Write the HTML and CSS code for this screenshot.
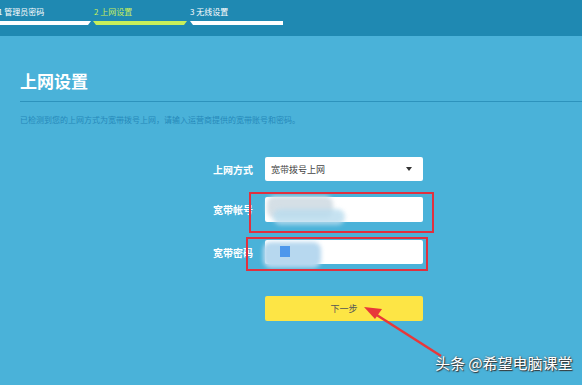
FILE: index.html
```html
<!DOCTYPE html>
<html lang="zh-CN">
<head>
  <meta charset="UTF-8">
  <title>上网设置</title>
  <link rel="stylesheet" href="styles.css">
</head>
<body>
  <div class="steps">
    <div class="step done"><span class="step-name">1 管理员密码</span><span class="bar"></span></div>
    <div class="step active"><span class="step-name">2 上网设置</span><span class="bar"></span></div>
    <div class="step"><span class="step-name">3 无线设置</span><span class="bar"></span></div>
  </div>

  <div class="main">
    <h1>上网设置</h1>
    <p class="desc">已检测到您的上网方式为宽带拨号上网，请输入运营商提供的宽带账号和密码。</p>

    <div class="form">
      <div class="row">
        <label>上网方式</label>
        <div class="select">宽带拨号上网<span class="caret"></span></div>
      </div>
      <div class="row row-account">
        <label>宽带帐号</label>
        <div class="field">
          <span class="smudge smudge-a"></span>
          <span class="smudge smudge-a2"></span>
          <span class="mark mark-a"></span>
        </div>
      </div>
      <div class="row row-pass">
        <label>宽带密码</label>
        <div class="field">
          <span class="smudge smudge-b"></span>
          <span class="blue-dot"></span>
          <span class="mark mark-b"></span>
        </div>
      </div>
      <div class="row row-btn">
        <label></label>
        <button class="next">下一步</button>
      </div>
    </div>
  </div>

  <svg class="arrow" width="582" height="385" viewBox="0 0 582 385">
    <line x1="441" y1="356" x2="372" y2="312" stroke="#e8373a" stroke-width="2.5"/>
    <polygon points="364,307 382,309 375,319" fill="#e8373a"/>
  </svg>

  <div class="watermark">头条 @希望电脑课堂</div>
</body>
</html>
```

FILE: styles.css
```css
body {
  margin: 0;
  width: 582px;
  height: 385px;
  overflow: hidden;
  background: #4ab2d9;
  font-family: "Noto Sans CJK SC", "Microsoft YaHei", sans-serif;
  color: #fff;
  position: relative;
}
.steps {
  height: 36px;
  background: #1f89b2;
  display: flex;
  margin-left: -2px;
}
.step {
  width: 96px;
  display: flex;
  flex-direction: column;
}
.step-name {
  font-size: 8px;
  line-height: 10px;
  padding-top: 7px;
  height: 14px;
  white-space: nowrap;
}
.step.active .step-name {
  color: #c8ef5a;
}
.bar {
  display: block;
  height: 4px;
  background: #fff;
  margin-right: 3px;
  clip-path: polygon(0 0, 100% 0, calc(100% - 3px) 100%, 0 100%);
}
.step.active .bar {
  background: #c8ef5a;
  clip-path: polygon(0 0, 100% 0, calc(100% - 3px) 100%, 3px 100%);
  margin-left: -1px;
}
.step:last-child .bar {
  clip-path: polygon(0 0, 100% 0, 100% 100%, 3px 100%);
}
.main {
  padding: 0 0 0 20px;
}
h1 {
  margin: 35px 0 0;
  font-size: 17px;
  line-height: 20px;
  font-weight: bold;
  padding-bottom: 10px;
  border-bottom: 1px solid #2d93bd;
}
.desc {
  margin: 12px 0 0;
  font-size: 8px;
  line-height: 12px;
  color: #2689b9;
}
.form {
  margin-top: 31px;
}
.row {
  display: flex;
  align-items: center;
}
.row label {
  width: 233px;
  padding-right: 12px;
  text-align: right;
  font-size: 10px;
  font-weight: bold;
}
.select, .field, .next {
  width: 158px;
  height: 24px;
  box-sizing: border-box;
  background: #fff;
  border-radius: 2px;
}
.select {
  display: flex;
  align-items: center;
  padding-left: 6px;
  font-size: 9px;
  color: #444;
  position: relative;
}
.caret {
  position: absolute;
  right: 11px;
  top: 10px;
  border-left: 3.5px solid transparent;
  border-right: 3.5px solid transparent;
  border-top: 4px solid #333;
}
.row-account {
  margin-top: 16px;
}
.row-account .field {
  height: 25px;
}
.row-pass {
  margin-top: 18px;
}
.row-btn {
  margin-top: 32px;
}
.field {
  position: relative;
}
.smudge {
  position: absolute;
  filter: blur(2px);
  border-radius: 8px;
}
.smudge-a {
  left: 2px;
  top: -1px;
  width: 66px;
  height: 22px;
  background: #d5dfe6;
}
.smudge-a2 {
  left: 8px;
  top: 12px;
  width: 72px;
  height: 16px;
  background: #b9dcee;
  opacity: .8;
}
.smudge-b {
  left: -2px;
  top: 2px;
  width: 58px;
  height: 26px;
  background: #b7d8ef;
}
.blue-dot {
  position: absolute;
  left: 15px;
  top: 6px;
  width: 10px;
  height: 11px;
  background: #4c97ec;
  filter: blur(0.5px);
}
.mark {
  position: absolute;
  border: 2px solid #e0303f;
}
.mark-a {
  left: -16px;
  top: -5px;
  width: 181px;
  height: 37px;
}
.mark-b {
  left: -19px;
  top: -3px;
  width: 178px;
  height: 30px;
}
.next {
  height: 25px;
  border: 0;
  background: #fde545;
  font-family: inherit;
  font-size: 9px;
  color: #555;
}
.arrow {
  position: absolute;
  left: 0;
  top: 0;
}
.watermark {
  position: absolute;
  left: 435px;
  top: 353px;
  font-size: 15px;
  line-height: 20px;
  color: #fff;
  text-shadow: 1px 1px 1px #333, 0 0 2px #555;
}
```
